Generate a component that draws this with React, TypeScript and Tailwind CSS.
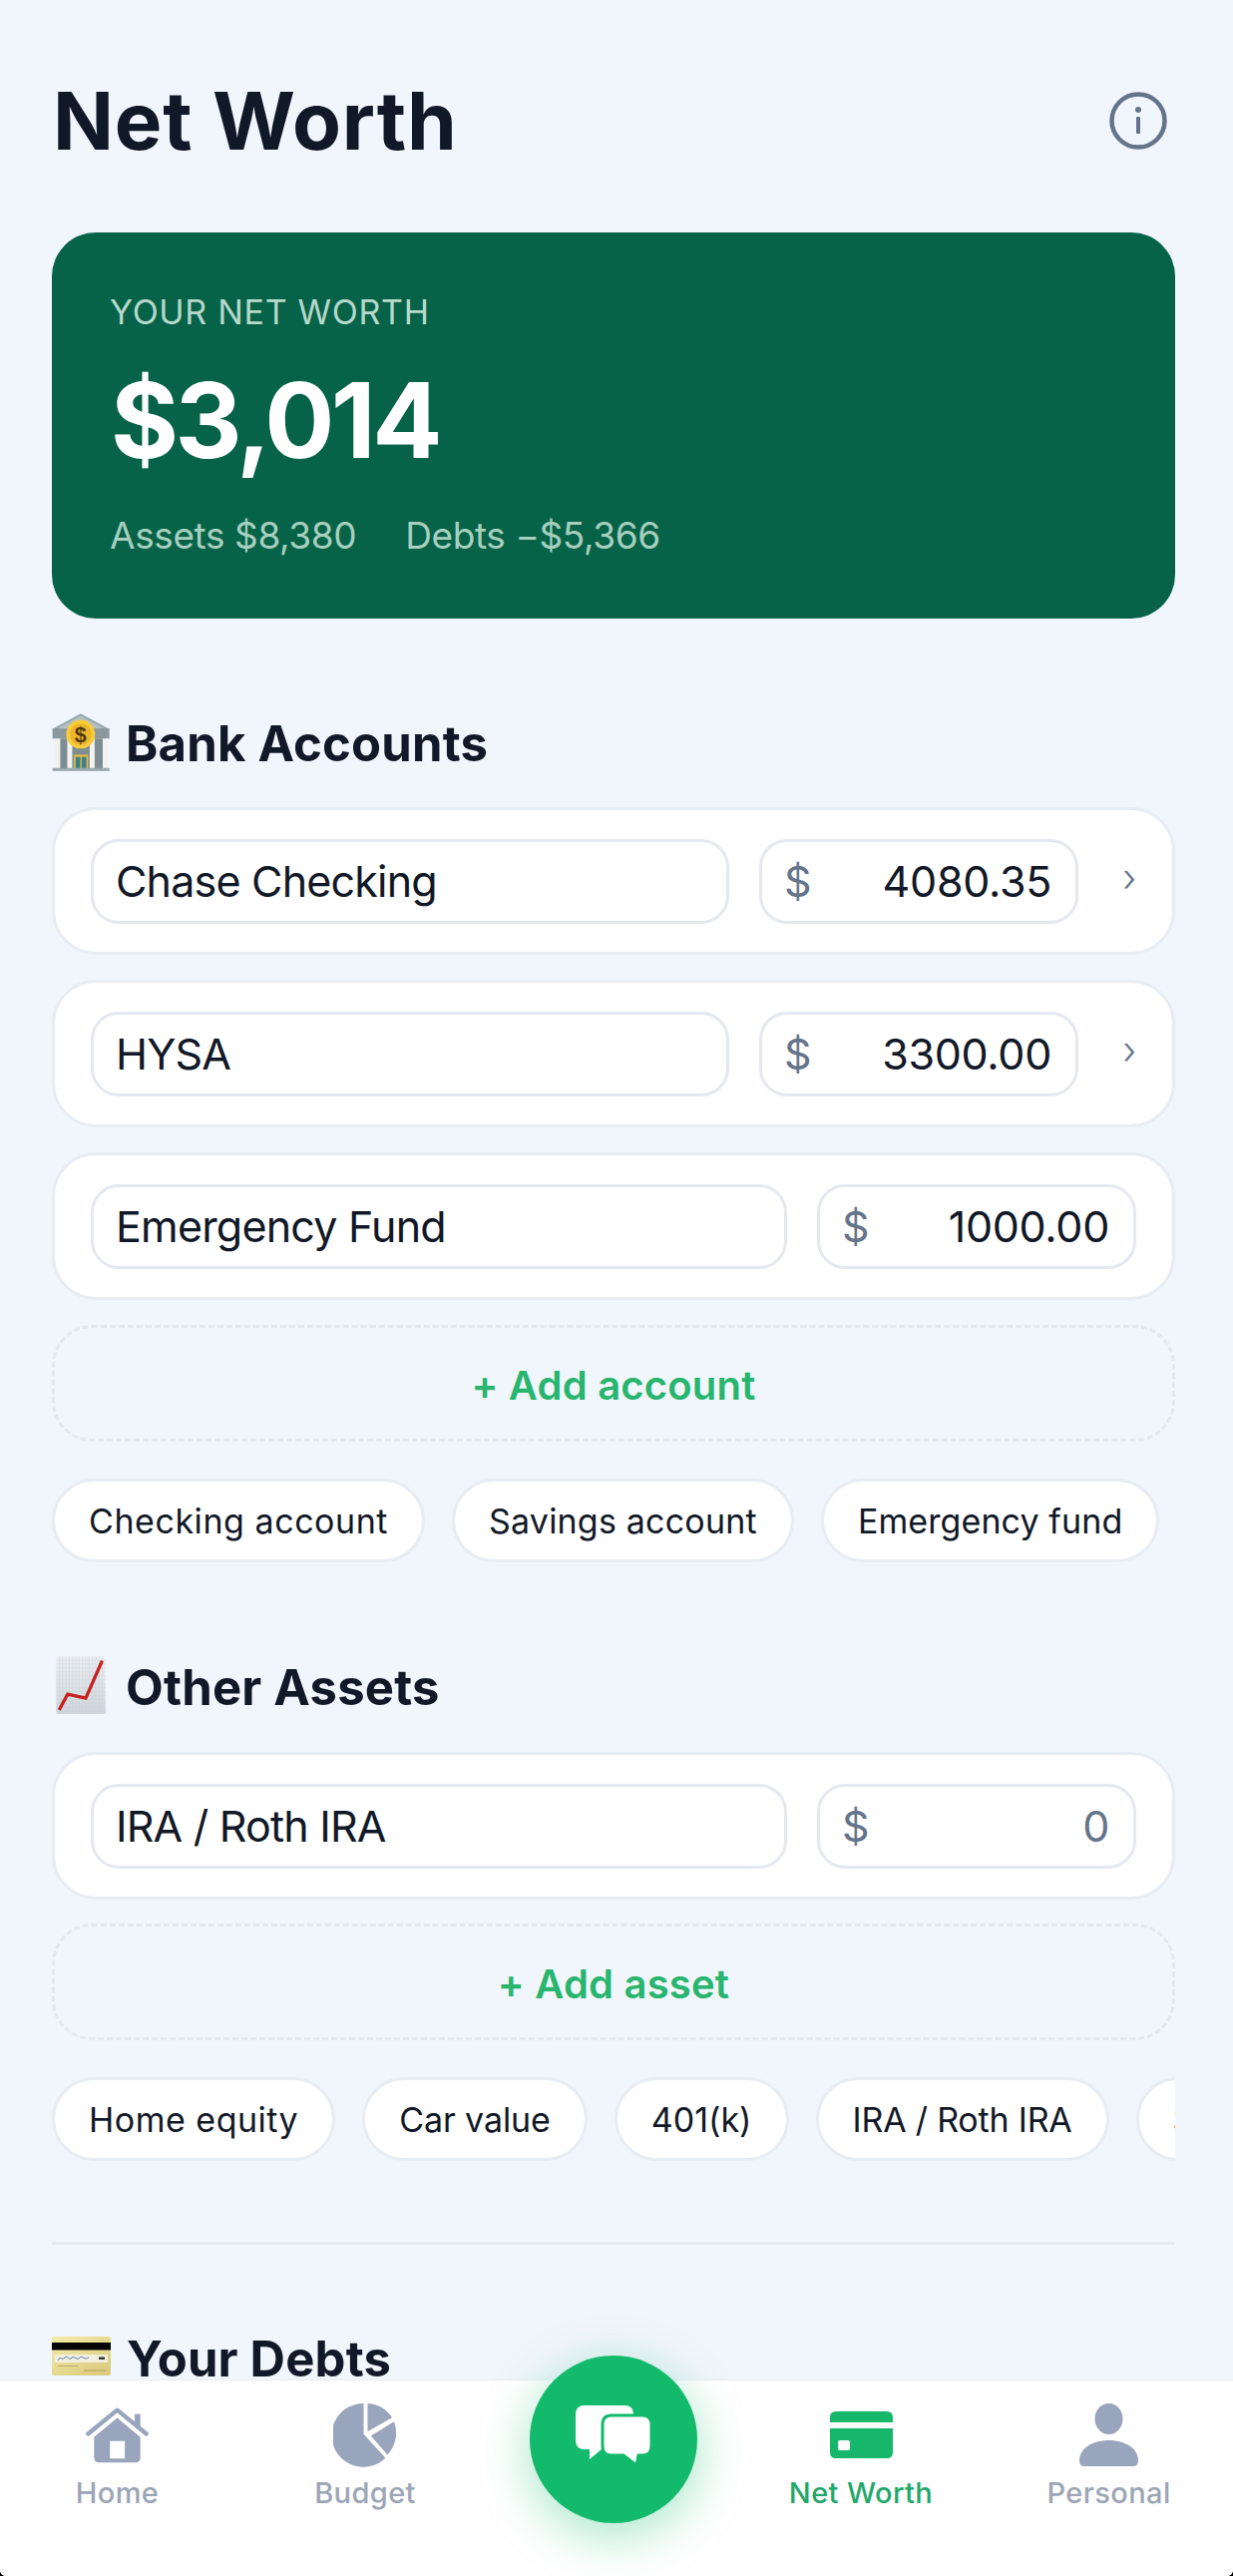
import React from "react";

const font = { fontFamily: '"Inter", "Liberation Sans", sans-serif' };

function BankEmoji() {
  return (
    <svg viewBox="42 45 173 172" className="w-[58px] h-[58px] shrink-0">
      <path d="M128 45 L215 92 H42 Z" fill="#98a6ab" />
      <path d="M128 52 L198 90 H58 Z" fill="#b4c0c4" />
      <rect x="44" y="90" width="170" height="30" fill="#8b999e" />
      <rect x="56" y="120" width="146" height="90" fill="#7d8d93" />
      <rect x="52" y="120" width="15" height="90" fill="#f2f2ef" />
      <rect x="88" y="120" width="15" height="90" fill="#f2f2ef" />
      <rect x="155" y="120" width="15" height="90" fill="#f2f2ef" />
      <rect x="194" y="120" width="15" height="90" fill="#f2f2ef" />
      <rect x="108" y="168" width="42" height="44" fill="#e2b93f" />
      <rect x="113" y="175" width="14" height="37" fill="#3f7f8c" />
      <rect x="131" y="175" width="14" height="37" fill="#3f7f8c" />
      <rect x="44" y="208" width="170" height="9" fill="#9aa8ad" />
      <circle cx="128" cy="107" r="43" fill="#f8cd3c" />
      <circle cx="128" cy="107" r="33" fill="#eeb62a" />
      <text x="128" y="130" textAnchor="middle" fontSize="64" fontWeight="700" fill="#4d3a10" fontFamily="Liberation Sans, sans-serif">$</text>
    </svg>
  );
}

function ChartEmoji() {
  const lines = [10, 20, 30, 40, 50, 60, 70, 80, 90, 100, 110, 120, 130, 140];
  return (
    <div className="w-[58px] h-[58px] shrink-0 flex justify-center">
      <svg viewBox="55 32 150 176" className="w-[50px] h-[58px]">
        <defs>
          <linearGradient id="paper" x1="0" y1="0" x2="0" y2="1">
            <stop offset="0" stopColor="#eef1f4" />
            <stop offset="1" stopColor="#cfd5da" />
          </linearGradient>
        </defs>
        <rect x="55" y="32" width="150" height="176" fill="url(#paper)" />
        {lines.map((n) => (
          <path key={n} d={`M${55 + n} 32 V208`} stroke="#c9d2da" strokeWidth="1.5" />
        ))}
        {lines.map((n) => (
          <path key={n} d={`M55 ${32 + n * 1.2} H205`} stroke="#c9d2da" strokeWidth="1.5" />
        ))}
        <path d="M64 196 L90 148 L145 160 L195 46" fill="none" stroke="#c8201e" strokeWidth="10" strokeLinejoin="miter" />
      </svg>
    </div>
  );
}

function CardEmoji() {
  return (
    <div className="w-[59px] h-[58px] shrink-0 flex items-start">
      <svg viewBox="0 0 59 39" className="w-[59px] h-[39px]">
        <defs>
          <linearGradient id="gold" x1="0" y1="0" x2="1" y2="1">
            <stop offset="0" stopColor="#f3eca8" />
            <stop offset="1" stopColor="#d9c87c" />
          </linearGradient>
        </defs>
        <rect x="0" y="0" width="59" height="39" rx="2" fill="url(#gold)" />
        <rect x="0" y="6" width="59" height="7.5" fill="#060606" />
        <rect x="3" y="18" width="53" height="8" fill="#f1f0e0" />
        <path d="M6 24 C9 18 10 25 13 21 C16 18 17 25 20 21 C23 19 25 25 28 21 C31 19 33 24 37 21" fill="none" stroke="#5c7cae" strokeWidth="1" />
        <rect x="47" y="20.5" width="6" height="2.5" fill="#3a3a3a" />
        <rect x="6" y="29" width="20" height="1" fill="#b9a968" />
        <rect x="32" y="33" width="22" height="2" fill="#c6b673" />
      </svg>
    </div>
  );
}

function Heading({ emoji, title, textClass }: { emoji: React.ReactNode; title: string; textClass: string }) {
  return (
    <div className="flex items-center h-[58px] gap-[16px]">
      {emoji}
      <span className={`text-[49px] leading-[58px] font-bold text-[#111827] tracking-[0.2px] ${textClass}`}>{title}</span>
    </div>
  );
}

function Row({ name, value, chevron, muted }: { name: string; value: string; chevron?: boolean; muted?: boolean }) {
  return (
    <div className="h-[148px] bg-white border-[3px] border-[#e8ecf3] rounded-[44px] px-[36px] flex items-center gap-[30px]">
      <div className="flex-1 h-[85px] border-[3px] border-[#e5e8ee] rounded-[28px] pl-[22px] pr-[24px] flex items-center text-[43px] text-[#111827] tracking-[-0.8px]">
        {name}
      </div>
      <div className="w-[320px] shrink-0 h-[85px] border-[3px] border-[#e5e8ee] rounded-[28px] pl-[22px] pr-[24px] flex items-center justify-between text-[43px] tracking-[-0.3px]">
        <span className="text-[#64748b]">$</span>
        <span className={muted ? "text-[#64748b]" : "text-[#111827]"}>{value}</span>
      </div>
      {chevron && <span className="w-[28px] shrink-0 text-[38px] leading-none font-light text-[#64748b] text-right -mt-[8px]">›</span>}
    </div>
  );
}

function AddButton({ label }: { label: string }) {
  return (
    <div className="h-[117px] border-[3px] border-dashed border-[#e3e7ee] rounded-[40px] flex items-center justify-center pt-[5px] text-[40px] font-semibold text-[#28b56e] tracking-[0.2px]">
      {label}
    </div>
  );
}

function Chip({ label, tracking = "tracking-[0.35px]" }: { label: string; tracking?: string }) {
  return (
    <div className={`h-[84px] shrink-0 bg-white border-[3px] border-[#e8ecf3] rounded-full px-[34px] flex items-center text-[34px] text-[#111827] whitespace-nowrap ${tracking}`}>
      {label}
    </div>
  );
}

function HomeIcon() {
  return (
    <svg viewBox="140 215 190 175" className="w-[63px] h-[58px]">
      <path fillRule="evenodd" d="M235 250 L305 308 V370 Q305 385 290 385 H180 Q165 385 165 370 V308 Z M213 320 V373 H258 V320 Z" fill="#98a5bd" />
      <path d="M147 298 L235 226 L323 298" fill="none" stroke="#98a5bd" strokeWidth="13" strokeLinecap="round" strokeLinejoin="round" />
      <rect x="288" y="238" width="17" height="40" fill="#98a5bd" />
    </svg>
  );
}

function PieIcon() {
  return (
    <svg viewBox="884 204 196 196" className="w-[65px] h-[65px]">
      <path d="M976 207 A96 96 0 1 0 1042 372 L976 300 Z" fill="#98a5bd" />
      <path d="M988 207 A96 96 0 0 1 1062 250 L988 292 Z" fill="#98a5bd" />
      <path d="M1068 262 A96 96 0 0 1 1048 362 L998 305 Z" fill="#98a5bd" />
    </svg>
  );
}

function CardIcon() {
  return (
    <svg viewBox="0 0 63 47" className="w-[63px] h-[47px]">
      <path d="M6 0 H57 Q63 0 63 6 V11 H0 V6 Q0 0 6 0 Z" fill="#17b76b" />
      <path fillRule="evenodd" d="M0 17 H63 V41 Q63 47 57 47 H6 Q0 47 0 41 Z M10 29 Q8 29 8 31 V37 Q8 39 10 39 H18 Q20 39 20 37 V31 Q20 29 18 29 Z" fill="#17b76b" />
    </svg>
  );
}

function PersonIcon() {
  return (
    <svg viewBox="0 0 59 63" className="w-[59px] h-[63px]">
      <ellipse cx="29.5" cy="15.5" rx="14" ry="15.5" fill="#98a5bd" />
      <path d="M0 57 C0 46 12 37 29.5 37 C47 37 59 46 59 57 Q59 63 54 63 H5 Q0 63 0 57 Z" fill="#98a5bd" />
    </svg>
  );
}

function ChatIcon() {
  return (
    <svg viewBox="0 0 80 64" className="w-[80px] h-[64px]">
      <path d="M11 2 H51 Q60 2 60 11 V37 Q60 46 51 46 H28 L16 56 L16 46 H11 Q2 46 2 37 V11 Q2 2 11 2 Z" fill="#fff" />
      <path d="M38 12 H69 Q78 12 78 21 V43 Q78 52 69 52 H65 L63 62 L50 52 H38 Q29 52 29 43 V21 Q29 12 38 12 Z" fill="#fff" stroke="#13ba6c" strokeWidth="3" />
    </svg>
  );
}

function NavItem({ icon, label, active }: { icon: React.ReactNode; label: string; active?: boolean }) {
  return (
    <div className="w-[248.5px] shrink-0 flex flex-col items-center pt-[22px]">
      <div className="h-[65px] flex items-center justify-center">{icon}</div>
      <div className={`mt-[9px] text-[29px] leading-[34px] font-medium tracking-[0.4px] ${active ? "text-[#22a86b]" : "text-[#9ca5b6]"}`}>{label}</div>
    </div>
  );
}

export default function App() {
  return (
    <div className="w-[1236px] h-[2582px] bg-black" style={font}>
      <div className="relative w-full h-full bg-[#f1f5fc] overflow-hidden rounded-b-[6px]">
        <div className="pl-[52px] pr-[58px] pt-[90px]">
          <div className="h-[62px] flex items-center justify-between">
            <h1 className="text-[80px] leading-[62px] font-bold text-[#111827] tracking-[0.8px] ml-[1px]">Net Worth</h1>
            <svg viewBox="0 0 58 58" className="w-[58px] h-[58px] mr-[8px]">
              <circle cx="29" cy="29" r="26.5" fill="none" stroke="#64748b" strokeWidth="4.5" />
              <circle cx="29" cy="18" r="3" fill="#64748b" />
              <rect x="27" y="25" width="4" height="17" rx="1" fill="#64748b" />
            </svg>
          </div>

          <div className="mt-[81px] h-[387px] bg-[#066348] rounded-[44px] px-[58px] pt-[63px]">
            <div className="text-[34px] leading-[34px] text-[#b7d8ca] tracking-[0.7px]">YOUR NET WORTH</div>
            <div className="mt-[36px] text-[104px] leading-[110px] font-bold text-white tracking-[-3.5px] ml-[1px]">$3,014</div>
            <div className="mt-[40px] flex gap-[49px] text-[37px] leading-[42px] text-[#a7cfbe] tracking-[-0.4px]">
              <span>Assets $8,380</span>
              <span>Debts −$5,366</span>
            </div>
          </div>

          <div className="mt-[95px]">
            <Heading emoji={<BankEmoji />} title="Bank Accounts" textClass="mt-[3px]" />
            <div className="mt-[36px] flex flex-col gap-[25px]">
              <Row name="Chase Checking" value="4080.35" chevron />
              <Row name="HYSA" value="3300.00" chevron />
              <Row name="Emergency Fund" value="1000.00" />
            </div>
            <div className="mt-[25px]">
              <AddButton label="+ Add account" />
            </div>
            <div className="mt-[37px] flex gap-[27px] overflow-hidden">
              <Chip label="Checking account" tracking="tracking-[0.55px]" />
              <Chip label="Savings account" tracking="tracking-[0.2px]" />
              <Chip label="Emergency fund" tracking="tracking-[0.1px]" />
            </div>
          </div>

          <div className="mt-[94px]">
            <Heading emoji={<ChartEmoji />} title="Other Assets" textClass="mt-[6px]" />
            <div className="mt-[38px]">
              <Row name="IRA / Roth IRA" value="0" muted />
            </div>
            <div className="mt-[24px]">
              <AddButton label="+ Add asset" />
            </div>
            <div className="mt-[37px] flex gap-[27px] overflow-hidden">
              <Chip label="Home equity" tracking="tracking-[0.5px]" />
              <Chip label="Car value" tracking="tracking-[-0.1px]" />
              <Chip label="401(k)" tracking="tracking-[0px]" />
              <Chip label="IRA / Roth IRA" tracking="tracking-[-0.2px]" />
              <Chip label="Stocks" />
            </div>
          </div>

          <div className="mt-[81px] h-[3px] bg-[#e5e9f0]" />

          <div className="mt-[92px]">
            <Heading emoji={<CardEmoji />} title="Your Debts" textClass="-mt-[13px]" />
          </div>
        </div>

        <div className="absolute left-0 right-0 bottom-0 h-[197px] bg-white border-t border-[#e8ecf3] flex justify-center pr-[7px]">
          <NavItem icon={<HomeIcon />} label="Home" />
          <NavItem icon={<PieIcon />} label="Budget" />
          <div className="relative w-[248.5px] shrink-0">
            <div className="absolute left-[41px] -top-[25px] w-[168px] h-[168px] rounded-full bg-[#13ba6c] flex items-center justify-center shadow-[0_12px_50px_rgba(19,186,108,0.38)]">
              <div className="-mt-[8px]">
                <ChatIcon />
              </div>
            </div>
          </div>
          <NavItem icon={<CardIcon />} label="Net Worth" active />
          <NavItem icon={<PersonIcon />} label="Personal" />
        </div>
      </div>
    </div>
  );
}
